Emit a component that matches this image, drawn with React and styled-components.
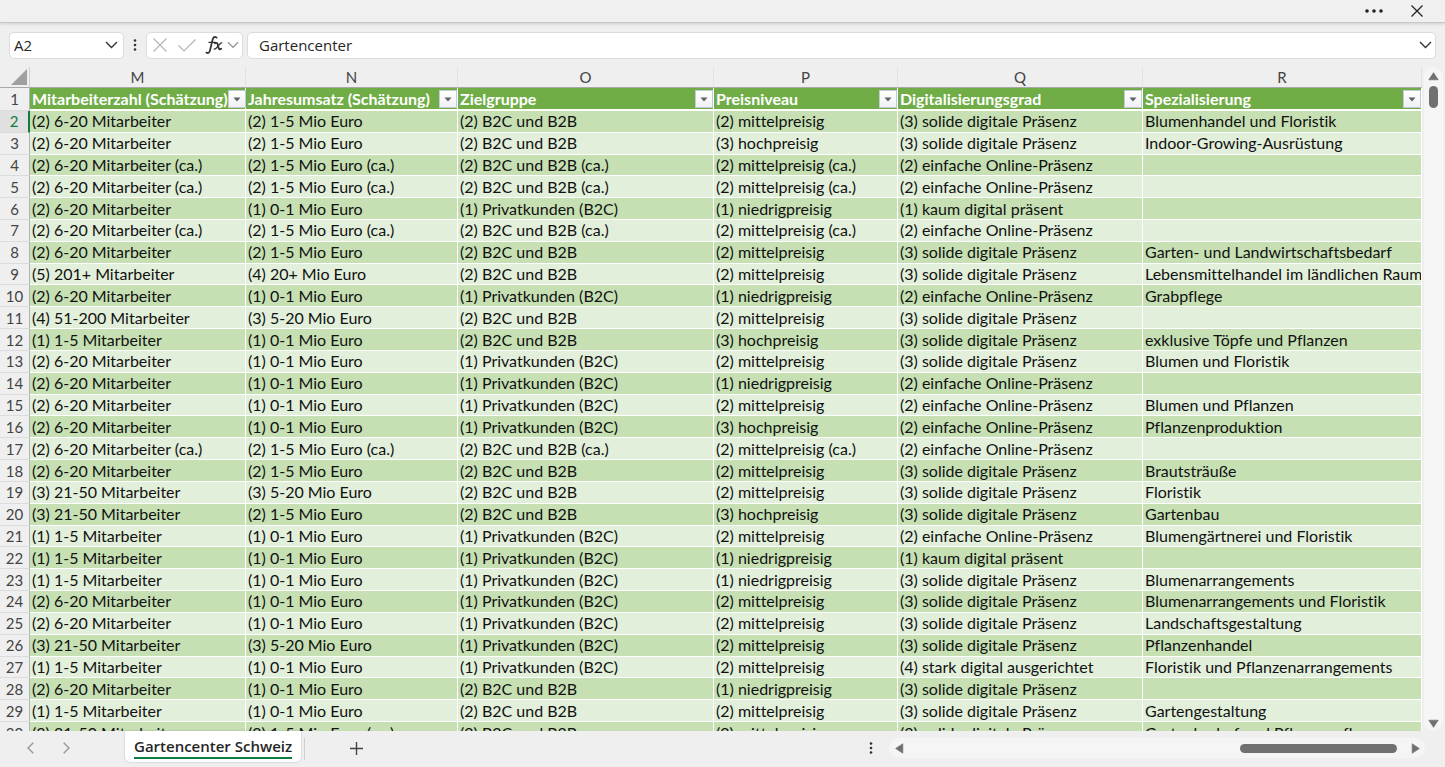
import React from "react";
import styled, { createGlobalStyle, css } from "styled-components";

const GlobalStyle = createGlobalStyle`
  * {
    box-sizing: border-box;
  }

  body {
    margin: 0;
    background: #efefef;
    font-family: "Open Sans", "Noto Sans", sans-serif;
    color: #262626;
  }

  button,
  input {
    font: inherit;
    color: inherit;
  }
`

const Page = styled.div`
  display: flex;
  flex-direction: column;
  height: 100vh;
  overflow: hidden;
`

const TitleBar = styled.header`
  display: flex;
  justify-content: flex-end;
  align-items: center;
  flex: none;
  gap: 21px;
  height: 23px;
  padding-right: 18px;
  background: #f0f0f0;
  border-bottom: 1px solid #c8c8c8;
  box-shadow: 0 1px 3px rgba(0, 0, 0, 0.14);
`

const IconButton = styled.button`
  display: flex;
  align-items: center;
  justify-content: center;
  flex: none;
  width: ${({ $width }) => $width || 20}px;
  height: 20px;
  padding: 0;
  border: 0;
  background: transparent;
  cursor: pointer;
`

const FormulaRow = styled.div`
  display: flex;
  align-items: center;
  flex: none;
  height: 44px;
  padding: 0 9px;
`

const Box = styled.div`
  display: flex;
  align-items: center;
  height: 27px;
  background: #fff;
  border: 1px solid #dcdcdc;
  border-radius: 5px;
`

const NameBox = styled(Box)`
  flex: none;
  width: 115px;
  padding: 0 2px 0 4px;
`

const FunctionBox = styled(Box)`
  flex: none;
  width: 97px;
  margin-right: 4px;
  padding: 0 0 0 3px;
`

const FormulaBox = styled(Box)`
  flex: 1;
  min-width: 0;
  padding: 0 0 0 11px;
`

const TextInput = styled.input`
  flex: 1;
  min-width: 0;
  padding: 0;
  border: 0;
  outline: 0;
  background: transparent;
  font-size: 15px;
`

const Sheet = styled.main`
  display: flex;
  flex: 1;
  min-height: 0;
`

const GridArea = styled.div`
  flex: 1;
  min-width: 0;
  overflow: hidden;
`

// the last row runs on under the tab bar
const Grid = styled.table`
  width: 100%;
  height: calc(100% + 13px);
  table-layout: fixed;
  border-collapse: separate;
  border-spacing: 0;
  font-family: Lato, "Open Sans", sans-serif;
  font-size: 16px;
  font-variant-ligatures: none;
  line-height: 20px;
  color: #111;
`

const Column = styled.col`
  width: ${({ $width }) => ($width ? `${$width}px` : "auto")};
`

const Corner = styled.td`
  height: 20px;
  padding: 0 2px 0 0;
  border-bottom: 1px solid #a8a8a8;
  border-right: 1px solid #d0d0d0;

  svg {
    display: block;
    margin-left: auto;
  }
`

const ColumnLetter = styled.th`
  height: 20px;
  padding: 0;
  font-size: 15px;
  font-weight: 400;
  color: #444;
  border-right: 1px solid #e2e2e2;
  border-bottom: 1px solid #a8a8a8;
`

const RowNumber = styled.th`
  padding: 0;
  font-size: 15px;
  font-weight: 400;
  text-align: center;
  color: #444;
  border-right: 1px solid #b4b4b4;
  border-bottom: 1px solid #dcdcdc;

  ${({ $active }) =>
    $active &&
    css`
      color: #107c41;
      background: #e0e0e0;
      border-right: 2px solid #107c41;
    `}
`

const HeadCell = styled.th`
  padding: 0 0 0 2px;
  text-align: left;
  font-weight: 700;
  color: #fff;
  white-space: nowrap;
  background: #70ad47;
  border-right: 1px solid #fff;
  border-bottom: 2px solid #fff;
`

const HeadContent = styled.div`
  display: flex;
  align-items: center;
  justify-content: space-between;
  height: 20px;
  padding-top: 2px;
`

const FilterButton = styled.button`
  display: flex;
  align-items: center;
  justify-content: center;
  flex: none;
  width: 18px;
  height: 18px;
  padding: 0;
  border: 1px solid #c6c9d6;
  background: linear-gradient(#fff, #eef0f5);
`

const Cell = styled.td`
  padding: 0 0 0 2px;
  overflow: hidden;
  white-space: nowrap;
  background: ${({ $dark }) => ($dark ? "#c6e0b4" : "#e2efda")};
  border-right: 1px solid #fff;
  border-bottom: 1px solid #fff;
`

const VerticalScroll = styled.div`
  display: flex;
  flex-direction: column;
  align-items: center;
  flex: none;
  width: 19px;
  margin: 0 2px;
  padding: 4px 0 2px;
  background: #f5f5f5;
  border-radius: 9px;
`

const VerticalThumb = styled.div`
  width: 9px;
  height: 22px;
  margin-top: 4px;
  background: #707070;
  border-radius: 5px;
`

const Spacer = styled.div`
  flex: 1;
`

const BottomBar = styled.footer`
  display: flex;
  align-items: flex-start;
  flex: none;
  height: 36px;
  padding: 0 20px;
`

const SheetNav = styled.nav`
  display: flex;
  flex: none;
  gap: 16px;
  width: 105px;
  padding-top: 7px;
`

const SheetTab = styled.button`
  height: 31px;
  padding: 0 9px;
  border: 0;
  border-radius: 0 0 5px 5px;
  background: #fff;
  box-shadow: 0 0 2px rgba(0, 0, 0, 0.25);
  font-size: 15px;
  font-weight: 600;
`

const TabLabel = styled.span`
  display: block;
  height: 25px;
  line-height: 24px;
  border-bottom: 2px solid #107c41;
`

const TabDivider = styled.div`
  width: 1px;
  height: 22px;
  margin: 7px 41px 0 3px;
  background: #cfcfcf;
`

const BarButton = styled(IconButton)`
  margin-top: 7px;
`

const HorizontalScroll = styled.div`
  display: flex;
  align-items: center;
  flex: 0 1 536px;
  height: 20px;
  margin: 7px 0 0 8px;
  background: #f5f5f5;
  border-radius: 10px;
`

const HorizontalThumb = styled.div`
  width: 157px;
  height: 9px;
  margin-right: 8px;
  background: #707070;
  border-radius: 5px;
`

const Chevron = ({ color = "#333", size = 13 }) => (
  <svg width={size} height="8" viewBox="0 0 13 8" fill="none" stroke={color} strokeWidth="1.4">
    <path d="M1 1l5.5 5.5L12 1" />
  </svg>
)

const Dots = () => (
  <svg width="4" height="14" viewBox="0 0 4 14" fill="#333">
    <circle cx="2" cy="2.5" r="1.3" />
    <circle cx="2" cy="7" r="1.3" />
    <circle cx="2" cy="11.5" r="1.3" />
  </svg>
)

const arrows = {
  up: "M5 1.5L9.3 8H0.7z",
  down: "M5 8.5L0.7 2h8.6z",
  left: "M1.5 5L8 0.7v8.6z",
  right: "M8.5 5L2 9.3V0.7z",
}

const Arrow = ({ direction }) => (
  <svg width="11" height="11" viewBox="0 0 10 10" fill="#707070" stroke="#707070" strokeLinejoin="round" strokeWidth="0.6">
    <path d={arrows[direction]} />
  </svg>
)

const columns = [
  { letter: "M", title: "Mitarbeiterzahl (Schätzung)", width: 216 },
  { letter: "N", title: "Jahresumsatz (Schätzung)", width: 212 },
  { letter: "O", title: "Zielgruppe", width: 256 },
  { letter: "P", title: "Preisniveau", width: 184 },
  { letter: "Q", title: "Digitalisierungsgrad", width: 245 },
  { letter: "R", title: "Spezialisierung" },
]

const m1 = "(1) 1-5 Mitarbeiter"
const m2 = "(2) 6-20 Mitarbeiter"
const m2ca = "(2) 6-20 Mitarbeiter (ca.)"
const m3 = "(3) 21-50 Mitarbeiter"
const u1 = "(1) 0-1 Mio Euro"
const u2 = "(2) 1-5 Mio Euro"
const u2ca = "(2) 1-5 Mio Euro (ca.)"
const u3 = "(3) 5-20 Mio Euro"
const privat = "(1) Privatkunden (B2C)"
const beide = "(2) B2C und B2B"
const beideCa = "(2) B2C und B2B (ca.)"
const niedrig = "(1) niedrigpreisig"
const mittel = "(2) mittelpreisig"
const mittelCa = "(2) mittelpreisig (ca.)"
const hoch = "(3) hochpreisig"
const kaum = "(1) kaum digital präsent"
const einfach = "(2) einfache Online-Präsenz"
const solide = "(3) solide digitale Präsenz"

const rows = [
  [m2, u2, beide, mittel, solide, "Blumenhandel und Floristik"],
  [m2, u2, beide, hoch, solide, "Indoor-Growing-Ausrüstung"],
  [m2ca, u2ca, beideCa, mittelCa, einfach, ""],
  [m2ca, u2ca, beideCa, mittelCa, einfach, ""],
  [m2, u1, privat, niedrig, kaum, ""],
  [m2ca, u2ca, beideCa, mittelCa, einfach, ""],
  [m2, u2, beide, mittel, solide, "Garten- und Landwirtschaftsbedarf"],
  ["(5) 201+ Mitarbeiter", "(4) 20+ Mio Euro", beide, mittel, solide, "Lebensmittelhandel im ländlichen Raum"],
  [m2, u1, privat, niedrig, einfach, "Grabpflege"],
  ["(4) 51-200 Mitarbeiter", u3, beide, mittel, solide, ""],
  [m1, u1, beide, hoch, solide, "exklusive Töpfe und Pflanzen"],
  [m2, u1, privat, mittel, solide, "Blumen und Floristik"],
  [m2, u1, privat, niedrig, einfach, ""],
  [m2, u1, privat, mittel, einfach, "Blumen und Pflanzen"],
  [m2, u1, privat, hoch, einfach, "Pflanzenproduktion"],
  [m2ca, u2ca, beideCa, mittelCa, einfach, ""],
  [m2, u2, beide, mittel, solide, "Brautsträuße"],
  [m3, u3, beide, mittel, solide, "Floristik"],
  [m3, u2, beide, hoch, solide, "Gartenbau"],
  [m1, u1, privat, mittel, einfach, "Blumengärtnerei und Floristik"],
  [m1, u1, privat, niedrig, kaum, ""],
  [m1, u1, privat, niedrig, solide, "Blumenarrangements"],
  [m2, u1, privat, mittel, solide, "Blumenarrangements und Floristik"],
  [m2, u1, privat, mittel, solide, "Landschaftsgestaltung"],
  [m3, u3, privat, mittel, solide, "Pflanzenhandel"],
  [m1, u1, privat, mittel, "(4) stark digital ausgerichtet", "Floristik und Pflanzenarrangements"],
  [m2, u1, beide, niedrig, solide, ""],
  [m1, u1, beide, mittel, solide, "Gartengestaltung"],
  [m3, u2ca, beide, mittel, solide, "Gartenbedarf und Pflanzenpflege"],
]

const App = () => {
  return (
    <>
      <GlobalStyle />
      <Page>
        <TitleBar>
          <IconButton aria-label="Mehr" $width={24}>
            <svg width="18" height="4" viewBox="0 0 18 4" fill="#222">
              <circle cx="2" cy="2" r="1.8" />
              <circle cx="9" cy="2" r="1.8" />
              <circle cx="16" cy="2" r="1.8" />
            </svg>
          </IconButton>
          <IconButton aria-label="Schließen">
            <svg width="12" height="12" viewBox="0 0 12 12" stroke="#222" strokeWidth="1.3">
              <path d="M0.5 0.5l11 11M11.5 0.5l-11 11" />
            </svg>
          </IconButton>
        </TitleBar>

        <FormulaRow>
          <NameBox>
            <TextInput aria-label="Namenfeld" defaultValue="A2" />
            <IconButton aria-label="Namen anzeigen">
              <Chevron />
            </IconButton>
          </NameBox>
          <IconButton aria-label="Größe ändern" $width={22}>
            <Dots />
          </IconButton>
          <FunctionBox>
            <IconButton aria-label="Abbrechen">
              <svg width="14" height="14" viewBox="0 0 14 14" stroke="#b4b4b4" strokeWidth="1.2">
                <path d="M0.5 0.5l13 13M13.5 0.5l-13 13" />
              </svg>
            </IconButton>
            <IconButton aria-label="Eingeben" $width={34}>
              <svg width="18" height="13" viewBox="0 0 18 13" fill="none" stroke="#b4b4b4" strokeWidth="1.2">
                <path d="M0.5 6.5l5.5 5.5L17.5 0.5" />
              </svg>
            </IconButton>
            <IconButton aria-label="Funktion einfügen">
              <svg width="18" height="20" viewBox="0 0 18 20" fill="none" stroke="#333" strokeLinecap="round">
                <path d="M11.6 2.6C9.8 1.2 8.2 2 7.6 4.6L5 15.4C4.5 17.8 3 18.6 1.4 17.6" strokeWidth="1.8" />
                <path d="M4 7.4h6.4" strokeWidth="1.3" />
                <path d="M10 8.3c2.4-1.3 2.8.8 3.2 3.2.4 2.4 1.3 3.4 3 2.3" strokeWidth="1.8" />
                <path d="M16.8 7.8c-2.4-.5-4.6 6.8-7.6 6.2" strokeWidth="1.3" />
              </svg>
            </IconButton>
            <IconButton aria-label="Funktionen" $width={18}>
              <Chevron color="#999" size={12} />
            </IconButton>
          </FunctionBox>
          <FormulaBox>
            <TextInput aria-label="Bearbeitungsleiste" defaultValue="Gartencenter" />
            <IconButton aria-label="Bearbeitungsleiste erweitern">
              <Chevron />
            </IconButton>
          </FormulaBox>
        </FormulaRow>

        <Sheet>
          <GridArea>
            <Grid>
              <colgroup>
                <Column $width={30} />
                {columns.map((column) => (
                  <Column key={column.letter} $width={column.width} />
                ))}
              </colgroup>
              <thead>
                <tr>
                  <Corner>
                    <svg width="16" height="16" viewBox="0 0 16 16" fill="#a0a0a0">
                      <path d="M16 0v16H0z" />
                    </svg>
                  </Corner>
                  {columns.map((column) => (
                    <ColumnLetter key={column.letter} scope="col">{column.letter}</ColumnLetter>
                  ))}
                </tr>
              </thead>
              <tbody>
                <tr>
                  <RowNumber scope="row">1</RowNumber>
                  {columns.map((column) => (
                    <HeadCell key={column.letter}>
                      <HeadContent>
                        {column.title}
                        <FilterButton aria-label={`${column.title} filtern`}>
                          <svg width="8" height="5" viewBox="0 0 8 5" fill="#606060">
                            <path d="M0.5 0.5h7L4 4.5z" />
                          </svg>
                        </FilterButton>
                      </HeadContent>
                    </HeadCell>
                  ))}
                </tr>
                {rows.map((row, index) => (
                  <tr key={index}>
                    <RowNumber scope="row" $active={index === 0}>{index + 2}</RowNumber>
                    {row.map((value, i) => (
                      <Cell key={columns[i].letter} $dark={index % 2 === 0}>{value}</Cell>
                    ))}
                  </tr>
                ))}
              </tbody>
            </Grid>
          </GridArea>
          <VerticalScroll>
            <Arrow direction="up" />
            <VerticalThumb />
            <Spacer />
            <Arrow direction="down" />
          </VerticalScroll>
        </Sheet>

        <BottomBar>
          <SheetNav>
            <IconButton aria-label="Vorheriges Blatt">
              <svg width="7" height="12" viewBox="0 0 7 12" fill="none" stroke="#999" strokeWidth="1.4">
                <path d="M6.3 0.7L1 6l5.3 5.3" />
              </svg>
            </IconButton>
            <IconButton aria-label="Nächstes Blatt">
              <svg width="7" height="12" viewBox="0 0 7 12" fill="none" stroke="#999" strokeWidth="1.4">
                <path d="M0.7 0.7L6 6 0.7 11.3" />
              </svg>
            </IconButton>
          </SheetNav>
          <SheetTab>
            <TabLabel>Gartencenter Schweiz</TabLabel>
          </SheetTab>
          <TabDivider />
          <BarButton aria-label="Neues Blatt">
            <svg width="13" height="13" viewBox="0 0 13 13" stroke="#444" strokeWidth="1.4">
              <path d="M6.5 0v13M0 6.5h13" />
            </svg>
          </BarButton>
          <Spacer />
          <BarButton aria-label="Bildlaufleiste anpassen">
            <Dots />
          </BarButton>
          <HorizontalScroll>
            <IconButton aria-label="Nach links">
              <Arrow direction="left" />
            </IconButton>
            <Spacer />
            <HorizontalThumb />
            <IconButton aria-label="Nach rechts">
              <Arrow direction="right" />
            </IconButton>
          </HorizontalScroll>
        </BottomBar>
      </Page>
    </>
  )
}

export default App
